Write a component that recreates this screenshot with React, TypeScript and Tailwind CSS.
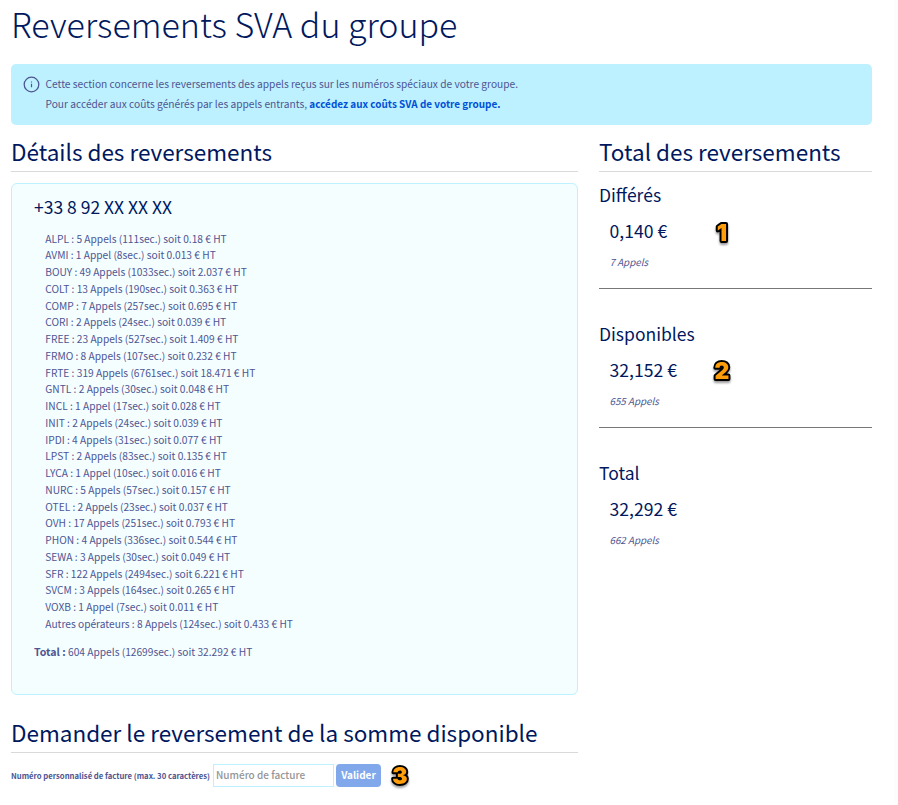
import React from "react";

const rows = [
  "ALPL : 5 Appels (111sec.) soit 0.18 € HT",
  "AVMI : 1 Appel (8sec.) soit 0.013 € HT",
  "BOUY : 49 Appels (1033sec.) soit 2.037 € HT",
  "COLT : 13 Appels (190sec.) soit 0.363 € HT",
  "COMP : 7 Appels (257sec.) soit 0.695 € HT",
  "CORI : 2 Appels (24sec.) soit 0.039 € HT",
  "FREE : 23 Appels (527sec.) soit 1.409 € HT",
  "FRMO : 8 Appels (107sec.) soit 0.232 € HT",
  "FRTE : 319 Appels (6761sec.) soit 18.471 € HT",
  "GNTL : 2 Appels (30sec.) soit 0.048 € HT",
  "INCL : 1 Appel (17sec.) soit 0.028 € HT",
  "INIT : 2 Appels (24sec.) soit 0.039 € HT",
  "IPDI : 4 Appels (31sec.) soit 0.077 € HT",
  "LPST : 2 Appels (83sec.) soit 0.135 € HT",
  "LYCA : 1 Appel (10sec.) soit 0.016 € HT",
  "NURC : 5 Appels (57sec.) soit 0.157 € HT",
  "OTEL : 2 Appels (23sec.) soit 0.037 € HT",
  "OVH : 17 Appels (251sec.) soit 0.793 € HT",
  "PHON : 4 Appels (336sec.) soit 0.544 € HT",
  "SEWA : 3 Appels (30sec.) soit 0.049 € HT",
  "SFR : 122 Appels (2494sec.) soit 6.221 € HT",
  "SVCM : 3 Appels (164sec.) soit 0.265 € HT",
  "VOXB : 1 Appel (7sec.) soit 0.011 € HT",
  "Autres opérateurs : 8 Appels (124sec.) soit 0.433 € HT",
];

function Marker({ n, className }: { n: string; className: string }) {
  return (
    <svg width="26" height="30" viewBox="0 0 26 30" className={`shrink-0 drop-shadow-[0_2px_1px_rgba(0,0,0,0.4)] ${className}`}>
      <text
        x="13"
        y="23"
        textAnchor="middle"
        className="fill-[#ff9d0a] stroke-black stroke-[4px] font-['Inter','Liberation_Sans',sans-serif] text-[23px] font-black [paint-order:stroke] [stroke-linejoin:round]"
      >
        {n}
      </text>
    </svg>
  );
}

function SectionTitle({ children }: { children: React.ReactNode }) {
  return (
    <h2 className="h-[37px] border-b border-[#d9d9dc] text-[22.5px] leading-[33px] font-normal whitespace-nowrap text-[#00185e]">
      {children}
    </h2>
  );
}

function Amount({ title, value, calls, marker }: { title: string; value: string; calls: string; marker?: string }) {
  return (
    <section className="h-[139px]">
      <h3 className="text-[17.5px] leading-[24px] font-normal text-[#00185e]">{title}</h3>
      <div className="mt-[12px] flex h-[24px] items-center pl-[10.5px]">
        <span className="w-[99px] text-[17.6px] leading-[24px] font-normal whitespace-nowrap text-[#00185e]">{value}</span>
        {marker && <Marker n={marker} className={marker === "1" ? "mt-[4px]" : "mt-[2px]"} />}
      </div>
      <p className="mt-[11px] pl-[10.5px] text-[9.8px] leading-[17px] italic">{calls}</p>
      {marker && <hr className="mt-[17px] border-t border-[#777779]" />}
    </section>
  );
}

export default function App() {
  return (
    <main className="h-[805px] w-[898px] overflow-hidden border-r-[4px] border-[#fdfdfd] bg-white pl-[11px] font-['Noto_Sans_CJK_SC','Noto_Sans_CJK_JP',sans-serif] text-[10.2px] font-normal text-[#4d5592]">
      <h1 className="h-[64px] text-[34px] leading-[47px] font-light whitespace-nowrap text-[#00185e]">
        Reversements SVA du groupe
      </h1>
      <div className="flex h-[61px] w-[861px] rounded-[5px] bg-[#bef1ff] pt-[10px] pl-[12px]">
        <svg width="17" height="17" viewBox="0 0 17 17" className="mt-[2px] mr-[5.5px] shrink-0" fill="none" stroke="#4d5592">
          <circle cx="8.5" cy="8.5" r="7.3" strokeWidth="1.3" />
          <path d="M8.5 7.7v3.6M8.5 5.4v1.2" strokeWidth="1.2" />
        </svg>
        <div className="leading-[20px]">
          <p>Cette section concerne les reversements des appels reçus sur les numéros spéciaux de votre groupe.</p>
          <p>
            Pour accéder aux coûts générés par les appels entrants,{" "}
            <a className="text-[9.95px] font-bold text-[#0050d7]">accédez aux coûts SVA de votre groupe.</a>
          </p>
        </div>
      </div>
      <div className="flex gap-[21px] pt-[10px]">
        <div className="w-[567px]">
          <SectionTitle>Détails des reversements</SectionTitle>
          <div className="mt-[11px] h-[512px] rounded-[6px] border border-[#bef1ff] bg-[#f5feff] px-[22px] pt-[11px]">
            <h3 className="text-[17.5px] leading-[24px] font-normal text-[#00185e]">+33 8 92 XX XX XX</h3>
            <ul className="mt-[11.65px] pl-[11.3px] leading-[16.75px]">
              {rows.map((r) => (
                <li key={r} className="whitespace-nowrap">{r}</li>
              ))}
            </ul>
            <p className="mt-[11.6px] leading-[16.8px]">
              <b className="text-[10.6px]">Total :</b> 604 Appels (12699sec.) soit 32.292 € HT
            </p>
          </div>
          <div className="mt-[21px]">
            <SectionTitle>Demander le reversement de la somme disponible</SectionTitle>
          </div>
          <form className="mt-[8px] flex h-[30px] items-center">
            <label className="w-[202px] text-[7.7px] font-bold whitespace-nowrap">
              Numéro personnalisé de facture (max. 30 caractères)
            </label>
            <input
              placeholder="Numéro de facture"
              className="mb-px h-[23px] w-[121px] border border-solid border-[#bef1ff] bg-white px-[2px] pb-[2px] text-[10px] font-medium placeholder:text-[#959595]"
            />
            <button type="button" className="mb-px ml-[2px] h-[23px] w-[45px] rounded-[4px] bg-[#80a8eb] pb-[2px] text-[10px] font-bold text-white">
              Valider
            </button>
            <Marker n="3" className="ml-[6px]" />
          </form>
        </div>
        <aside className="w-[273px]">
          <SectionTitle>Total des reversements</SectionTitle>
          <div className="pt-[11px]">
            <Amount title="Différés" value="0,140 €" calls="7 Appels" marker="1" />
            <Amount title="Disponibles" value="32,152 €" calls="655 Appels" marker="2" />
            <Amount title="Total" value="32,292 €" calls="662 Appels" />
          </div>
        </aside>
      </div>
    </main>
  );
}
